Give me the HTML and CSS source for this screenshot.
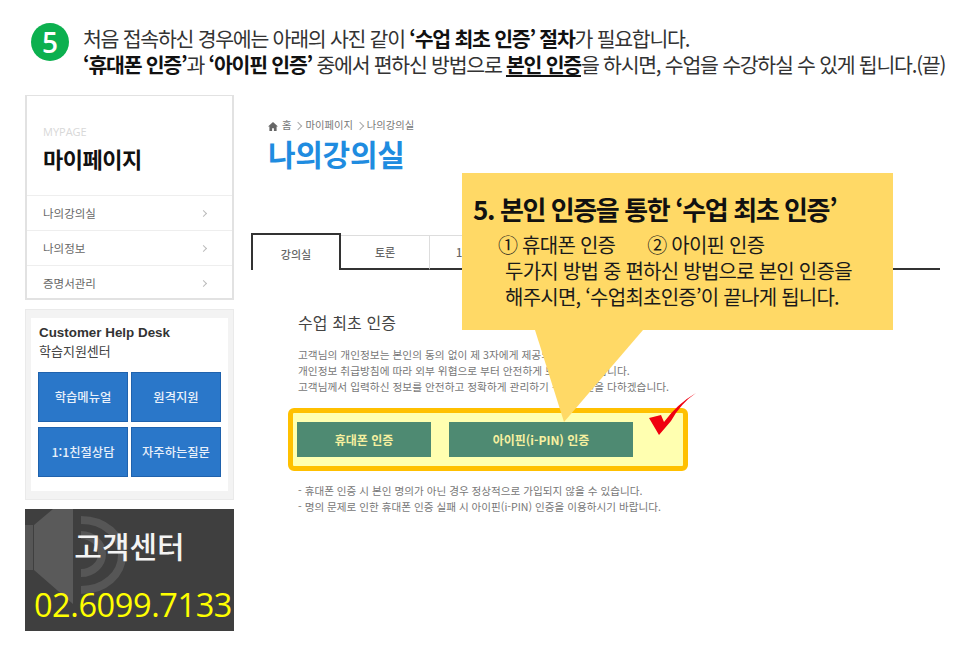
FILE: index.html
```html
<!DOCTYPE html>
<html lang="ko">
<head>
  <meta charset="UTF-8">
  <title>수업 최초 인증</title>
  <link rel="stylesheet" href="styles.css">
</head>
<body>
  <div class="page">

    <!-- 안내 문구 -->
    <div class="intro">
      <div class="step-num">5</div>
      <p class="intro-text">
        처음 접속하신 경우에는 아래의 사진 같이 <b>‘수업 최초 인증’ 절차</b>가 필요합니다.<br>
        <b>‘휴대폰 인증’</b>과 <b>‘아이핀 인증’</b> 중에서 편하신 방법으로 <b class="under">본인 인증</b>을 하시면, 수업을 수강하실 수 있게 됩니다.(끝)
      </p>
    </div>

    <div class="shot">
      <!-- 왼쪽 메뉴 -->
      <div class="side">
        <div class="my-box">
          <div class="my-head">
            <div class="my-en">MYPAGE</div>
            <div class="my-title">마이페이지</div>
          </div>
          <div class="my-row"><span>나의강의실</span><i></i></div>
          <div class="my-row"><span>나의정보</span><i></i></div>
          <div class="my-row"><span>증명서관리</span><i></i></div>
        </div>

        <div class="help-box">
          <div class="help-inner">
            <div class="help-en">Customer Help Desk</div>
            <div class="help-ko">학습지원센터</div>
            <div class="help-grid">
              <a>학습메뉴얼</a>
              <a>원격지원</a>
              <a>1:1친절상담</a>
              <a>자주하는질문</a>
            </div>
          </div>
        </div>

        <div class="call-box">
          <svg class="call-icon" width="130" height="122" viewBox="0 0 130 122">
            <path d="M0 16 H8 V61 H0 Z" fill="#565656"/>
            <path d="M9 16 L28 0 H48 V95 L9 61 Z" fill="#5a5a5a"/>
            <path d="M56 11 C80 11 97 27 97 46 C97 65 80 81 56 81" fill="none" stroke="#565656" stroke-width="8"/>
            <path d="M56 26 C68 26 77 35 77 45 C77 55 68 64 56 64" fill="none" stroke="#565656" stroke-width="8"/>
          </svg>
          <div class="call-title">고객센터</div>
          <div class="call-num">02.6099.7133</div>
        </div>
      </div>

      <!-- 오른쪽 본문 -->
      <div class="main">
        <div class="crumb">
          <svg width="10" height="9" viewBox="0 0 11 10"><path d="M5.500 0 L11 5 H9.500 V10 H6.500 V7 H4.500 V10 H1.500 V5 H0 Z" fill="#666"/></svg>
          <span>홈</span><em></em><span>마이페이지</span><em></em><span>나의강의실</span>
        </div>
        <h1 class="page-title">나의강의실</h1>

        <div class="tabs">
          <div class="tab active">강의실</div>
          <div class="tab">토론</div>
          <div class="tab">1:1문의</div>
          <div class="tab-rest"></div>
        </div>

        <div class="cert">
          <h2>수업 최초 인증</h2>
          <p class="cert-text">
            고객님의 개인정보는 본인의 동의 없이 제 3자에게 제공되지 않으며,<br>
            개인정보 취급방침에 따라 외부 위협으로 부터 안전하게 보호되고 있습니다.<br>
            고객님께서 입력하신 정보를 안전하고 정확하게 관리하기 위해 최선을 다하겠습니다.
          </p>
          <div class="cert-btns">
            <a class="btn-phone">휴대폰 인증</a>
            <a class="btn-ipin">아이핀(i-PIN) 인증</a>
          </div>
          <p class="cert-note">
            - 휴대폰 인증 시 본인 명의가 아닌 경우 정상적으로 가입되지 않을 수 있습니다.<br>
            - 명의 문제로 인한 휴대폰 인증 실패 시 아이핀(i-PIN) 인증을 이용하시기 바랍니다.
          </p>
        </div>
      </div>
    </div>

    <!-- 말풍선 -->
    <svg class="tail" width="110" height="93" viewBox="0 0 110 93"><path d="M0 0 H108 L29 92 Z" fill="#ffd966"/></svg>
    <div class="callout">
      <div class="callout-title">5. 본인 인증을 통한 ‘수업 최초 인증’</div>
      <div class="callout-opts"><span>① 휴대폰 인증</span><span>② 아이핀 인증</span></div>
      <div class="callout-desc">두가지 방법 중 편하신 방법으로 본인 인증을<br>해주시면, ‘수업최초인증’이 끝나게 됩니다.</div>
    </div>

    <svg class="check" width="48" height="44" viewBox="0 0 48 44">
      <path d="M0 25 L12 22 L15 29 Q28 11 47 0 Q32 10 22 28 L10 42 Z" fill="#f00010"/>
    </svg>
  </div>
</body>
</html>
```

FILE: styles.css
```css
* {
    box-sizing: border-box;
}
body {
    margin: 0;
    background: #fff;
    color: #333;
    font-family: "Noto Sans CJK KR", "Noto Sans", sans-serif;
}
.page {
    position: relative;
    width: 966px;
    height: 649px;
    overflow: hidden;
}

/* intro */
.intro {
    display: flex;
    gap: 14px;
    padding: 23px 0 0 31px;
    height: 95px;
}
.step-num {
    width: 38px;
    height: 38px;
    border-radius: 50%;
    background: #0cb04f;
    color: #fff;
    font-family: "Open Sans", sans-serif;
    font-size: 28px;
    font-weight: 600;
    line-height: 38px;
    text-align: center;
}
.intro-text {
    margin: 2px 0 0;
    font-size: 20.500px;
    line-height: 26px;
    letter-spacing: -1.25px;
    color: #333;
    white-space: nowrap;
}
.intro-text b {
    color: #111;
}
.under {
    text-decoration: underline;
}

.shot {
    display: flex;
    gap: 17px;
    padding-left: 25px;
}

/* sidebar */
.side {
    width: 209px;
    display: flex;
    flex-direction: column;
    gap: 9px;
}
.my-box {
    height: 205px;
    border: 2px solid #e2e2e2;
    border-top-width: 1px;
}
.my-head {
    height: 99px;
    padding: 28px 0 0 16px;
}
.my-en {
    font-family: "Open Sans", sans-serif;
    font-size: 11px;
    line-height: 16px;
    color: #d8d8d8;
}
.my-title {
    margin-top: 4px;
    font-size: 22px;
    font-weight: 700;
    line-height: 28px;
    color: #111;
    letter-spacing: -0.5px;
}
.my-row {
    display: flex;
    justify-content: space-between;
    align-items: center;
    height: 35px;
    padding: 0 26px 0 16px;
    border-top: 1px solid #eee;
    font-size: 11.500px;
    color: #666;
}
.my-row i {
    width: 5px;
    height: 5px;
    border-top: 1px solid #bbb;
    border-right: 1px solid #bbb;
    transform: rotate(45deg);
}

.help-box {
    height: 191px;
    padding: 8px 5px;
    background: #f3f3f3;
    border: 1px solid #eaeaea;
}
.help-inner {
    height: 100%;
    padding: 6px 7px 0;
    background: #fff;
}
.help-en {
    padding-left: 1px;
    font-family: "Liberation Sans", sans-serif;
    font-size: 13.400px;
    font-weight: 700;
    line-height: 17px;
    color: #333;
}
.help-ko {
    padding-left: 1px;
    font-size: 13px;
    line-height: 19px;
    color: #444;
}
.help-grid {
    display: grid;
    grid-template-columns: 90px 90px;
    grid-auto-rows: 50px;
    gap: 5px 3px;
    margin-top: 12px;
}
.help-grid a {
    display: flex;
    align-items: center;
    justify-content: center;
    background: #2a77c9;
    border: 1px solid #1f62ad;
    color: #e8f0fa;
    font-size: 12.300px;
    font-weight: 500;
}

.call-box {
    position: relative;
    height: 122px;
    background: #3f3f3f;
    overflow: hidden;
    text-align: center;
}
.call-icon {
    position: absolute;
    left: 0;
    top: 0;
}
.call-title {
    position: relative;
    margin-top: 12px;
    font-size: 30px;
    font-weight: 500;
    line-height: 48px;
    color: #f4f4f4;
}
.call-num {
    position: relative;
    margin-top: 15px;
    padding-left: 7px;
    font-family: "Open Sans", sans-serif;
    font-size: 32.500px;
    line-height: 42px;
    letter-spacing: -0.4px;
    color: #ffff00;
    white-space: nowrap;
}

/* main content */
.main {
    width: 689px;
}
.crumb {
    display: flex;
    align-items: center;
    gap: 4px;
    height: 18px;
    margin-top: 20px;
    padding-left: 17px;
    font-size: 10.300px;
    color: #777;
}
.crumb svg {
    margin-top: 4px;
}
.crumb em {
    width: 6px;
    height: 6px;
    margin-top: 4px;
    border-top: 1px solid #aaa;
    border-right: 1px solid #aaa;
    transform: rotate(45deg);
}
.page-title {
    margin: 0;
    padding-left: 17px;
    font-size: 30px;
    font-weight: 700;
    line-height: 40px;
    letter-spacing: -0.3px;
    color: #1f8ce0;
}
.tabs {
    display: flex;
    align-items: flex-end;
    height: 37px;
    margin-top: 60px;
}
.tab {
    width: 89px;
    height: 35px;
    border-top: 1px solid #ddd;
    border-right: 1px solid #ddd;
    border-bottom: 2px solid #333;
    font-size: 11px;
    font-weight: 500;
    line-height: 33px;
    text-align: center;
    color: #666;
}
.tab.active {
    width: 90px;
    height: 37px;
    border: 2px solid #333;
    border-bottom: none;
    line-height: 38px;
}
.tab-rest {
    flex: 1;
    border-bottom: 2px solid #333;
}
.cert {
    padding: 40px 0 0 47px;
}
.cert h2 {
    margin: 0;
    font-size: 16px;
    font-weight: 400;
    line-height: 24px;
    letter-spacing: 0.1px;
    color: #444;
}
.cert-text {
    margin: 13px 0 0;
    font-size: 10.700px;
    line-height: 16px;
    color: #777;
    white-space: nowrap;
}
.cert-btns {
    display: flex;
    gap: 18px;
    width: 400px;
    height: 63px;
    margin: 13px 0 0 -10px;
    padding: 9px 4px;
    background: #ffffb0;
    border: 5px solid #ffc000;
    border-radius: 6px;
}
.cert-btns a {
    display: flex;
    align-items: center;
    justify-content: center;
    height: 35px;
    background: #4e8a72;
    color: #f6f0a0;
    font-size: 12px;
    font-weight: 700;
}
.btn-phone {
    width: 134px;
}
.btn-ipin {
    width: 184px;
}
.cert-note {
    margin: 12px 0 0;
    font-size: 10.600px;
    line-height: 16px;
    color: #777;
    white-space: nowrap;
}

/* callout over the screenshot */
.callout {
    position: absolute;
    left: 462px;
    top: 173px;
    width: 431px;
    height: 157px;
    padding: 19px 0 0 11px;
    background: #ffd966;
    color: #1a1a1a;
    white-space: nowrap;
}
.callout-title {
    margin-bottom: 6px;
    font-size: 26px;
    font-weight: 700;
    line-height: 34px;
    letter-spacing: -1.4px;
    color: #111;
}
.callout-opts {
    display: flex;
    gap: 32px;
    padding-left: 25px;
    font-size: 20px;
    line-height: 26px;
    letter-spacing: -0.75px;
}
.callout-desc {
    padding-left: 32px;
    font-size: 20px;
    line-height: 26px;
    letter-spacing: -0.75px;
}
.tail {
    position: absolute;
    left: 535px;
    top: 330px;
}
.check {
    position: absolute;
    left: 649px;
    top: 393px;
}
```
